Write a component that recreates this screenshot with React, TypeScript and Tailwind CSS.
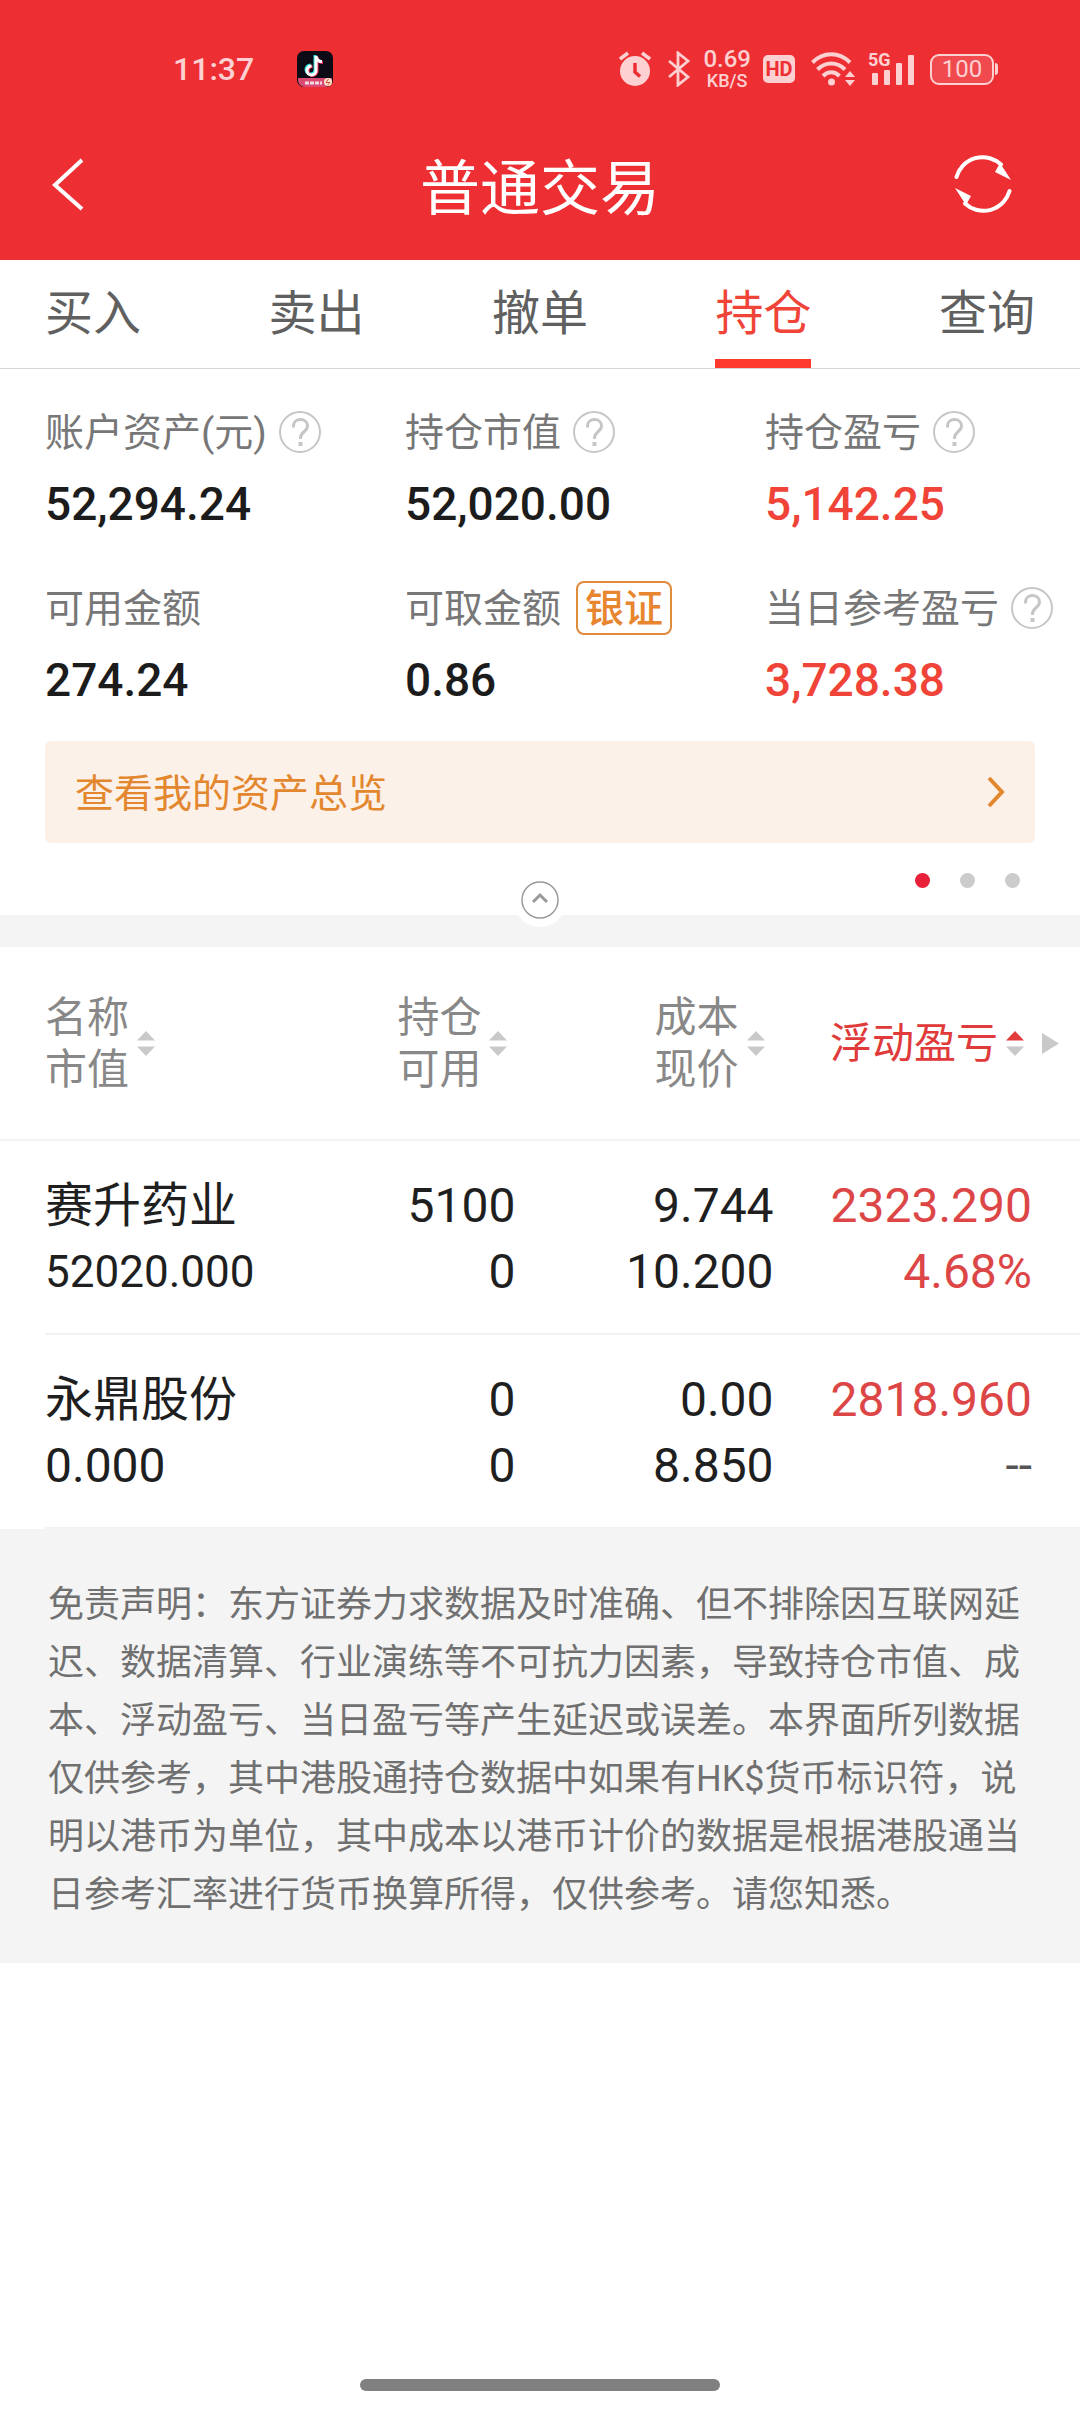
import type { ReactNode } from 'react';

const latin = "font-[Roboto,'Noto_Sans_CJK_SC',sans-serif]";

function Help({ label }: { label: string }) {
  return (
    <button type="button" aria-label={label} className="shrink-0">
      <svg className="size-[42px]" viewBox="0 0 42 42" fill="none" stroke="#c6c6c6">
        <circle cx="21" cy="21" r="20" strokeWidth="2" />
        <path d="M14.500 16.500v-1.500c0-4 3-6.500 7-6.500s7 2.500 7 6.500c0 5.500-7 6-7 11.500v1.500" strokeWidth="3" />
        <path d="M21.500 31v4" strokeWidth="4" />
      </svg>
    </button>
  );
}

function Stat({ label, value, red, extra }: { label: string; value: string; red?: boolean; extra?: ReactNode }) {
  return (
    <div className="pl-[45px]">
      <dt className="flex h-14 items-center gap-3 whitespace-nowrap text-[39px] leading-none text-[#777]">
        <span className="pt-0.5">{label}</span>
        {extra}
      </dt>
      <dd className={`mt-4 text-[46px] font-medium leading-[56px] ${red ? 'text-[#f04438]' : 'text-[#1c1c1c]'}`}>{value}</dd>
    </div>
  );
}

function Sort({ up }: { up?: boolean }) {
  return (
    <svg className="h-[25px] w-[18px] shrink-0" viewBox="0 0 18 25" aria-hidden="true">
      <path d="M9 0l9 9.500H0z" fill={up ? '#e03a3a' : '#c9c9c9'} />
      <path d="M9 25l9-9.500H0z" fill="#c9c9c9" />
    </svg>
  );
}

function StatusBar() {
  return (
    <div className="flex h-[120px] items-center pl-[173px] pr-[82px] pt-[18px] text-[#fdd0d1]">
      <span className="text-[32px] font-medium leading-none">11:37</span>
      <svg className="ml-[43px] size-9" viewBox="0 0 36 36" aria-hidden="true">
        <rect width="36" height="36" rx="7" fill="#0c0b16" />
        <path d="M1 27h34v2a7 7 0 0 1-7 7H8a7 7 0 0 1-7-7z" fill="#d94a72" />
        <path d="M8 32h17" stroke="#fbd9e0" strokeWidth="3" strokeDasharray="4 1" />
        <circle cx="31" cy="31" r="4" fill="#fbe6c8" />
        <path d="M31.500 28l-2.500 3.500h4L30.500 34" stroke="#d9483f" fill="none" />
        <g fill="none" strokeWidth="3">
          <path d="M18 4v14.500a4.500 4.500 0 1 1-4.500-4.500M18 5c.5 4 3 5.500 6 5.500" stroke="#2be5e2" />
          <path d="M20 6v14a4.500 4.500 0 1 1-4.500-4.500M20 6c.5 4 3 5.500 6 5.500" stroke="#f0325a" />
          <path d="M19 5v14.500a4.500 4.500 0 1 1-4.500-4.500M19 5c.5 4 3 5.500 6 5.500" stroke="#fff" />
        </g>
      </svg>
      <div className="ml-auto flex items-center">
        <svg className="h-9 w-8" viewBox="0 0 32 36" aria-hidden="true">
          <circle cx="16" cy="20" r="15" fill="currentColor" />
          <path d="M1 8l8-6M31 8l-8-6" stroke="currentColor" strokeWidth="3.500" />
          <path d="M16 12v9l5 4.500" fill="none" stroke="#ed2f33" strokeWidth="3.500" />
        </svg>
        <svg className="ml-4 h-9 w-6" viewBox="0 0 24 36" fill="none" stroke="currentColor" strokeWidth="2.800" aria-hidden="true">
          <path d="M2 10l19 16-10 8V2l10 8L2 26" />
        </svg>
        <span className="ml-3 flex flex-col items-center font-medium">
          <span className="text-2xl leading-[23px]">0.69</span>
          <span className="text-lg leading-[20px]">KB/S</span>
        </span>
        <span className="ml-3 flex h-7 w-8 items-center justify-center rounded-[5px] bg-[#fdd0d1] text-[20px] font-bold leading-none text-[#ed2f33]">HD</span>
        <svg className="ml-4 h-9 w-[44px]" viewBox="0 0 44 36" fill="none" stroke="currentColor" strokeWidth="4" aria-hidden="true">
          <path d="M1.500 11.500c10.500-11 27-11 37.500 0M6.500 18.500c8-8 19.500-8 27.500 0M12 25c5-5 11.500-5 16.500 0" />
          <circle cx="20.500" cy="31" r="3.500" fill="currentColor" stroke="none" />
          <path d="M39 20l5 6H34zM39 35l5-6H34z" fill="currentColor" stroke="none" />
        </svg>
        <span className="relative ml-[13px] h-9 w-[50px]">
          <span className="absolute left-0 top-0 text-[18px] font-bold leading-[18px]">5G</span>
          <svg className="h-9 w-[50px]" viewBox="0 0 50 36" fill="currentColor" aria-hidden="true">
            <rect x="4" y="22" width="6" height="12" rx="1" />
            <rect x="16" y="19" width="6" height="15" rx="1" />
            <rect x="28" y="12" width="6" height="22" rx="1" />
            <rect x="40" y="4" width="6" height="30" rx="1" />
          </svg>
        </span>
        <span className="ml-3 flex h-[31px] w-[64px] items-center justify-center rounded-[9px] border-2 border-current bg-[#f04a4e] text-2xl leading-none">100</span>
        <span className="ml-px h-3 w-[3px] rounded-r bg-[#fdd0d1]" />
      </div>
    </div>
  );
}

const tabs = ['买入', '卖出', '撤单', '持仓', '查询'];

const rows = [
  { name: '赛升药业', value: '52020.000', small: true, held: '5100', usable: '0', cost: '9.744', price: '10.200', gain: '2323.290', rate: '4.68%' },
  { name: '永鼎股份', value: '0.000', small: false, held: '0', usable: '0', cost: '0.00', price: '8.850', gain: '2818.960', rate: '--' },
];

export default function App() {
  return (
    <div className={`flex min-h-screen flex-col bg-white ${latin}`}>
      <header className="bg-[#ed2f33] text-white">
        <StatusBar />
        <div className="flex h-[140px] items-center justify-between pb-3 pl-[50px] pr-[68px]">
          <button type="button" aria-label="返回" className="w-[64px]">
            <svg className="h-[54px] w-[35px]" viewBox="0 0 35 54" fill="none" stroke="currentColor" strokeWidth="4">
              <path d="M32 3L5 28l27 24" />
            </svg>
          </button>
          <h1 className="pl-3 pt-3 text-[60px] leading-none">普通交易</h1>
          <button type="button" aria-label="刷新">
            <svg className="size-[58px]" viewBox="0 0 58 58" fill="none" stroke="currentColor" strokeWidth="4" strokeLinecap="round">
              <path d="M2.500 22A27 27 0 0 1 47 9.500M55.500 36A27 27 0 0 1 11 48.500" />
              <path d="M57 25L41 17l5-9zM1 33l16 8-5 9z" fill="currentColor" stroke="none" />
            </svg>
          </button>
        </div>
      </header>

      <nav className="flex h-[109px] justify-between border-b border-[#d6d6d6] px-[45px] text-[48px] leading-none">
        {tabs.map((tab) => (
          <a
            key={tab}
            href="#"
            className={`flex items-center border-b-[9px] pt-2 ${tab === '持仓' ? 'border-[#ff3b30] text-[#f04438]' : 'border-transparent text-[#606060]'}`}
          >
            {tab}
          </a>
        ))}
      </nav>

      <section className="relative pt-[35px]">
        <dl className="grid grid-cols-3 gap-y-12">
          <Stat label="账户资产(元)" value="52,294.24" extra={<Help label="账户资产说明" />} />
          <Stat label="持仓市值" value="52,020.00" extra={<Help label="持仓市值说明" />} />
          <Stat label="持仓盈亏" value="5,142.25" red extra={<Help label="持仓盈亏说明" />} />
          <Stat label="可用金额" value="274.24" />
          <Stat
            label="可取金额"
            value="0.86"
            extra={
              <button type="button" className="ml-[3px] flex h-[54px] items-center rounded-lg border-2 border-[#e08a3c] px-[7px] pt-0.5 font-medium text-[#e8852f]">
                银证
              </button>
            }
          />
          <Stat label="当日参考盈亏" value="3,728.38" red extra={<Help label="当日参考盈亏说明" />} />
        </dl>
        <a href="#" className="mx-[45px] mt-[33px] flex h-[102px] items-center justify-between rounded-md bg-[#fcf1e8] pl-[30px] pr-[29px] text-[39px] leading-none text-[#e3872f]">
          <span className="pt-1">查看我的资产总览</span>
          <svg className="h-8 w-5" viewBox="0 0 20 32" fill="none" stroke="currentColor" strokeWidth="4" aria-hidden="true">
            <path d="M3 2l13 14L3 30" />
          </svg>
        </a>
        <div className="flex h-[72px] justify-end gap-[30px] pr-[60px] pt-[30px]">
          <span className="size-[15px] rounded-full bg-[#e8203a]" />
          <span className="size-[15px] rounded-full bg-[#ccc]" />
          <span className="size-[15px] rounded-full bg-[#ccc]" />
        </div>
        <button type="button" aria-label="收起" className="absolute -bottom-3 left-1/2 flex size-[52px] -translate-x-1/2 items-center justify-center rounded-full bg-white pb-0.5">
          <svg className="size-[38px]" viewBox="0 0 38 38" fill="none" stroke="#999">
            <circle cx="19" cy="19" r="18" strokeWidth="1.500" />
            <path d="M12 21l7-7 7 7" strokeWidth="3" />
          </svg>
        </button>
      </section>
      <div className="h-8 bg-[#f4f4f4]" />

      <table className="w-full table-fixed">
        <colgroup>
          <col className="w-[30%]" />
          <col className="w-[18%]" />
          <col className="w-[24%]" />
          <col className="w-[28%]" />
        </colgroup>
        <thead>
          <tr className="h-[193px] border-b-2 border-[#f2f2f2] text-[42px] leading-[52px] text-[#888]">
            <th className="pl-[45px] font-normal">
              <button type="button" className="flex items-center gap-2 text-left"><span className="pt-0.5">名称<br />市值</span><Sort /></button>
            </th>
            <th className="pr-[11px] font-normal">
              <button type="button" className="ml-auto flex items-center gap-2 text-right"><span className="pt-0.5">持仓<br />可用</span><Sort /></button>
            </th>
            <th className="pr-[13px] font-normal">
              <button type="button" className="ml-auto flex items-center gap-2 text-right"><span className="pt-0.5">成本<br />现价</span><Sort /></button>
            </th>
            <th className="pr-[21px] font-normal">
              <div className="flex items-center justify-end gap-[18px]">
                <button type="button" className="flex items-center gap-2 whitespace-nowrap text-[#e03a3a]"><span className="pt-0.5">浮动盈亏</span><Sort up /></button>
                <svg className="h-[21px] w-[17px] shrink-0" viewBox="0 0 17 21" aria-hidden="true"><path d="M0 0l17 10.500L0 21z" fill="#c9c9c9" /></svg>
              </div>
            </th>
          </tr>
        </thead>
        <tbody className="text-[48px] leading-[66px] text-[#1f1f1f]">
          {rows.map((r) => (
            <tr key={r.name} className="h-[194px] whitespace-nowrap text-right">
              <td className="pl-[45px] text-left">
                <div className="flex h-[194px] flex-col justify-center border-b-2 border-[#f2f2f2] pt-1">
                  <div>{r.name}</div>
                  <div className={r.small ? 'text-[44px]' : ''}>{r.value}</div>
                </div>
              </td>
              <td className="p-0">
                <div className="flex h-[194px] flex-col justify-center border-b-2 border-[#f2f2f2] pr-[3px] pt-1">
                  <div>{r.held}</div>
                  <div>{r.usable}</div>
                </div>
              </td>
              <td className="p-0">
                <div className="flex h-[194px] flex-col justify-center border-b-2 border-[#f2f2f2] pr-1 pt-1">
                  <div>{r.cost}</div>
                  <div>{r.price}</div>
                </div>
              </td>
              <td className="p-0">
                <div className="flex h-[194px] flex-col justify-center border-b-2 border-[#f2f2f2] pr-12 pt-1 text-[#dd4646]">
                  <div>{r.gain}</div>
                  <div className={r.rate === '--' ? 'text-[#555]' : ''}>{r.rate}</div>
                </div>
              </td>
            </tr>
          ))}
        </tbody>
      </table>

      <p className="bg-[#f4f4f4] px-12 pb-[39px] pt-[47px] text-[36px] leading-[58px] text-[#707070]">
        免责声明：东方证券力求数据及时准确、但不排除因互联网延迟、数据清算、行业演练等不可抗力因素，导致持仓市值、成本、浮动盈亏、当日盈亏等产生延迟或误差。本界面所列数据仅供参考，其中港股通持仓数据中如果有HK$货币标识符，说明以港币为单位，其中成本以港币计价的数据是根据港股通当日参考汇率进行货币换算所得，仅供参考。请您知悉。
      </p>

      <div className="mx-auto mb-[21px] mt-auto h-3 w-1/3 rounded-full bg-[#808080]" />
    </div>
  );
}
